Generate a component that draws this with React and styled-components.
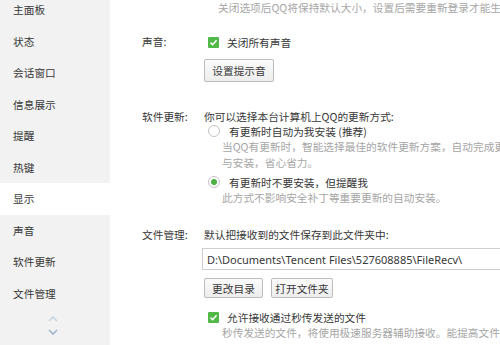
import styled, { createGlobalStyle } from 'styled-components';

const GlobalStyle = createGlobalStyle`
  html, body { margin: 0; padding: 0; background: #fff; }
  body {
    width: 500px;
    height: 345px;
    overflow: hidden;
    font-family: "Noto Sans CJK SC", "Noto Sans", sans-serif;
    font-size: 10.7px;
    color: #383838;
  }
`;

const navItems = ['主面板', '状态', '会话窗口', '信息展示', '提醒', '热键', '显示', '声音', '软件更新', '文件管理'];

const App = () => (
  <>
    <GlobalStyle />
    <Window>
      <Sidebar>
        <NavList>
          {navItems.map((item) => (
            <NavItem key={item} $active={item === '显示'}>{item}</NavItem>
          ))}
        </NavList>
        <ScrollArrows>
          <svg width="12" height="8" viewBox="0 0 12 8">
            <path d="M2 6 L6 2 L10 6" fill="none" stroke="#c9d6e3" strokeWidth="1.6" />
          </svg>
          <svg width="12" height="8" viewBox="0 0 12 8">
            <path d="M2 2 L6 6 L10 2" fill="none" stroke="#9fb6cc" strokeWidth="1.6" />
          </svg>
        </ScrollArrows>
      </Sidebar>

      <Main>
        <Hint>关闭选项后QQ将保持默认大小，设置后需要重新登录才能生效</Hint>

        <Section $top={18}>
          <Label>声音:</Label>
          <Content>
            <CheckRow>
              <CheckBox />
              <span>关闭所有声音</span>
            </CheckRow>
            <Button $top={9} $width={70} $height={23}>设置提示音</Button>
          </Content>
        </Section>

        <Section $top={27}>
          <Label>软件更新:</Label>
          <Content>
            <Line>你可以选择本台计算机上QQ的更新方式:</Line>
            <OptionRow $top={-2}>
              <Radio />
              <span>有更新时自动为我安装 (推荐)</span>
            </OptionRow>
            <Desc>当QQ有更新时，智能选择最佳的软件更新方案，自动完成更新下载</Desc>
            <Desc>与安装，省心省力。</Desc>
            <OptionRow $top={3}>
              <Radio $checked />
              <span>有更新时不要安装，但提醒我</span>
            </OptionRow>
            <Desc>此方式不影响安全补丁等重要更新的自动安装。</Desc>
          </Content>
        </Section>

        <Section $top={21}>
          <Label>文件管理:</Label>
          <Content>
            <Line>默认把接收到的文件保存到此文件夹中:</Line>
            <PathBox>D:\Documents\Tencent Files\527608885\FileRecv\</PathBox>
            <ButtonRow>
              <Button $width={59} $height={20}>更改目录</Button>
              <Button $width={62} $height={20}>打开文件夹</Button>
            </ButtonRow>
            <CheckRow $top={11}>
              <CheckBox />
              <span>允许接收通过秒传发送的文件</span>
            </CheckRow>
            <Desc>秒传发送的文件，将使用极速服务器辅助接收。能提高文件接收速度</Desc>
          </Content>
        </Section>
      </Main>
    </Window>
  </>
);

const CheckBox = () => (
  <CheckBoxBox>
    <svg width="9" height="9" viewBox="0 0 9 9">
      <path d="M1.5 4.6 L3.6 6.7 L7.6 2.2" fill="none" stroke="#fff" strokeWidth="1.6" />
    </svg>
  </CheckBoxBox>
);

const Window = styled.div`
  display: flex;
  width: 500px;
  height: 345px;
  overflow: hidden;
`;

const Sidebar = styled.div`
  width: 110px;
  flex-shrink: 0;
  background: #f2f2f2;
  display: flex;
  flex-direction: column;
`;

const NavList = styled.div`
  margin-top: -6px;
  display: flex;
  flex-direction: column;
`;

const NavItem = styled.div`
  height: 31.55px;
  line-height: 31.55px;
  padding-left: 13px;
  color: #383838;
  background: ${(p) => (p.$active ? '#ffffff' : 'transparent')};
`;

const ScrollArrows = styled.div`
  display: flex;
  flex-direction: column;
  align-items: center;
  gap: 5px;
  margin-top: 6px;
  padding-right: 4px;
`;

const Main = styled.div`
  flex: 1;
  padding-left: 32px;
  display: flex;
  flex-direction: column;
  white-space: nowrap;
  overflow: hidden;
`;

const Hint = styled.div`
  line-height: 16px;
  padding-left: 76px;
  color: #a6a6a6;
`;

const Section = styled.div`
  display: grid;
  grid-template-columns: 62px 1fr;
  margin-top: ${(p) => p.$top || 0}px;
`;

const Label = styled.div`
  line-height: 16px;
`;

const Content = styled.div`
  display: flex;
  flex-direction: column;
  align-items: flex-start;
  min-width: 0;
`;

const Line = styled.div`
  line-height: 16px;
`;

const CheckRow = styled.div`
  display: flex;
  align-items: center;
  height: 16px;
  padding-left: 4px;
  gap: 8px;
  margin-top: ${(p) => p.$top || 0}px;
`;

const OptionRow = styled(CheckRow)`
  gap: 9px;
`;

const CheckBoxBox = styled.span`
  width: 11px;
  height: 11px;
  border-radius: 1px;
  background: #52b848;
  display: flex;
  align-items: center;
  justify-content: center;
`;

const Radio = styled.span`
  width: 10px;
  height: 10px;
  border-radius: 50%;
  border: 1px solid #c4c4c4;
  background: #fff;
  display: flex;
  align-items: center;
  justify-content: center;
  &::after {
    content: '';
    width: 6px;
    height: 6px;
    border-radius: 50%;
    background: ${(p) => (p.$checked ? '#4cb043' : 'transparent')};
  }
`;

const Desc = styled.div`
  line-height: 16px;
  padding-left: 18px;
  color: #a6a6a6;
`;

const Button = styled.div`
  box-sizing: border-box;
  width: ${(p) => p.$width}px;
  height: ${(p) => p.$height}px;
  margin-top: ${(p) => p.$top || 0}px;
  border: 1px solid #bcbcbc;
  border-radius: 2px;
  background: linear-gradient(#fbfbfb, #ededed);
  display: flex;
  align-items: center;
  justify-content: center;
`;

const PathBox = styled.div`
  box-sizing: border-box;
  margin-top: 5px;
  margin-left: -2px;
  width: 360px;
  height: 22px;
  border: 1px solid #cfcfcf;
  padding-left: 4px;
  display: flex;
  align-items: center;
  font-family: "Noto Sans", "Noto Sans CJK SC", sans-serif;
  font-size: 11px;
`;

const ButtonRow = styled.div`
  display: flex;
  gap: 8px;
  margin-top: 8px;
`;

export default App;
